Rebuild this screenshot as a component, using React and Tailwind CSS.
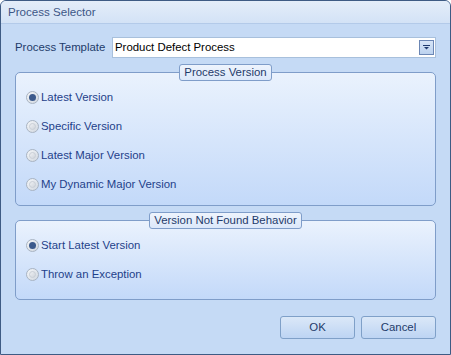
import React from "react";

function Radio({ checked, label }) {
  return (
    <div className="flex items-center h-[29px]">
      <span className="w-[13px] h-[13px] rounded-full border border-[#a9b4c2] bg-gradient-to-br from-[#f4f6f8] to-[#d2d8e0] flex items-center justify-center">
        {checked ? (
          <span className="w-[7px] h-[7px] rounded-full bg-[#3c5a8c]" />
        ) : (
          <span className="w-[7px] h-[7px] rounded-full border border-[#c9ced6] bg-gradient-to-br from-[#eef0f3] to-[#d0d5dc]" />
        )}
      </span>
      <span className="ml-[2px] text-[11.4px] text-[#1e3f8a]">{label}</span>
    </div>
  );
}

function Group({ title, children }) {
  return (
    <div className="relative pt-[8px]">
      <div className="rounded-[5px] border border-[#7f9dc9] bg-gradient-to-b from-[#eaf2fd] to-[#c3d9f9] px-[10px] pt-[10px] pb-[6px]">
        {children}
      </div>
      <div className="absolute top-0 left-0 right-0 flex justify-center">
        <span className="h-[17px] px-[4px] rounded-[3px] border border-[#7f9dc9] bg-gradient-to-b from-[#eef4fd] to-[#dce8fa] text-[11.4px] leading-[15px] text-[#1e3a6a]">
          {title}
        </span>
      </div>
    </div>
  );
}

export default function App() {
  return (
    <div
      className="w-[451px] h-[355px] flex flex-col border border-[#3e5b84] rounded-t-[6px] overflow-hidden bg-[#c5daf5]"
      style={{ fontFamily: '"Liberation Sans", Arial, sans-serif' }}
    >
      <div className="h-[23px] flex items-center px-[7px] bg-gradient-to-b from-[#e4edf9] to-[#d3e2f6] border-b border-[#b3cae9] text-[11.6px] text-[#3d5686]">
        Process Selector
      </div>
      <div className="flex-1 flex flex-col px-[14px]">
        <div className="flex items-center mt-[13px] h-[21px]">
          <span className="w-[97px] text-[11.4px] text-[#1e3a6a]">Process Template</span>
          <div className="flex-1 h-[21px] bg-white border border-[#a8c0dc] flex items-center pl-[2px] pr-[1px]">
            <span className="flex-1 text-[11.4px] text-black">Product Defect Process</span>
            <span className="w-[15px] h-[15px] border border-[#6b86b4] bg-gradient-to-b from-[#d7e5f7] to-[#bcd2ef] flex items-center justify-center">
              <svg width="7" height="5" viewBox="0 0 7 5">
                <rect x="0" y="0" width="7" height="1" fill="#1f3a6e" />
                <path d="M1 2 H6 L3.5 4.5 Z" fill="#1f3a6e" />
              </svg>
            </span>
          </div>
        </div>
        <div className="mt-[6px]">
          <Group title="Process Version">
            <Radio checked label="Latest Version" />
            <Radio label="Specific Version" />
            <Radio label="Latest Major Version" />
            <Radio label="My Dynamic Major Version" />
          </Group>
        </div>
        <div className="mt-[6px]">
          <Group title="Version Not Found Behavior">
            <Radio checked label="Start Latest Version" />
            <Radio label="Throw an Exception" />
            <div className="h-[4px]" />
          </Group>
        </div>
        <div className="flex justify-end gap-[6px] mt-[16px]">
          <button className="w-[75px] h-[23px] rounded-[3px] border border-[#7fa0c8] bg-gradient-to-b from-[#dbe8f8] to-[#bdd4f3] text-[11.4px] text-[#1e3a6a]">
            OK
          </button>
          <button className="w-[75px] h-[23px] rounded-[3px] border border-[#7fa0c8] bg-gradient-to-b from-[#dbe8f8] to-[#bdd4f3] text-[11.4px] text-[#1e3a6a]">
            Cancel
          </button>
        </div>
      </div>
    </div>
  );
}
